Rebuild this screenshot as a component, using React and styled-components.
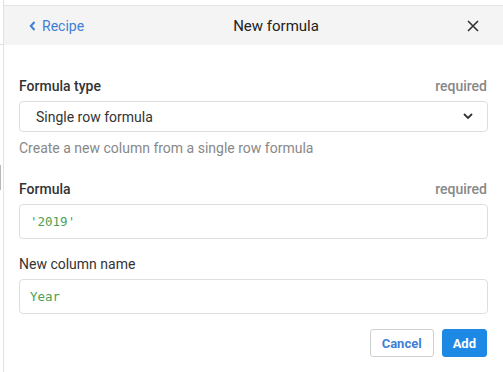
import styled, { createGlobalStyle } from "styled-components"

const GlobalStyle = createGlobalStyle`
  body {
    margin: 0;
    background: #fff;
    font-family: Roboto, "Liberation Sans", sans-serif;
    color: #333;
  }
`

function ChevronLeft() {
  return (
    <svg width="7" height="10" viewBox="0 0 7 10">
      <polyline points="5.5,1 1.8,5 5.5,9" fill="none" stroke="#3f7fd6" strokeWidth="2" />
    </svg>
  )
}

function ChevronDown() {
  return (
    <svg width="10" height="7" viewBox="0 0 10 7">
      <polyline points="1,1 5,5 9,1" fill="none" stroke="#333" strokeWidth="1.8" />
    </svg>
  )
}

function CloseIcon() {
  return (
    <svg width="12" height="12" viewBox="0 0 12 12">
      <path d="M1 1 L11 11 M11 1 L1 11" stroke="#333" strokeWidth="1.6" />
    </svg>
  )
}

export default function App() {
  return (
    <>
      <GlobalStyle />
      <Page>
        <Strip>
          <StripRule />
          <StripThumb />
        </Strip>
        <Panel>
          <Header>
            <BackLink>
              <ChevronLeft />
              <span>Recipe</span>
            </BackLink>
            <Title>New formula</Title>
            <CloseButton>
              <CloseIcon />
            </CloseButton>
          </Header>

          <Body>
            <Field>
              <LabelRow>
                <Label strong>Formula type</Label>
                <Required>required</Required>
              </LabelRow>
              <Select>
                <span>Single row formula</span>
                <ChevronDown />
              </Select>
              <Help>Create a new column from a single row formula</Help>
            </Field>

            <Field>
              <LabelRow>
                <Label strong>Formula</Label>
                <Required>required</Required>
              </LabelRow>
              <Input>'2019'</Input>
            </Field>

            <Field>
              <LabelRow>
                <Label>New column name</Label>
              </LabelRow>
              <Input>Year</Input>
            </Field>

            <Actions>
              <Button>Cancel</Button>
              <Button primary>Add</Button>
            </Actions>
          </Body>
        </Panel>
      </Page>
    </>
  )
}

const Page = styled.div`
  display: flex;
  height: 372px;
  overflow: hidden;
`
const Strip = styled.div`
  width: 3px;
  border-right: 1px solid #e2e2e2;
  display: flex;
  flex-direction: column;
`
const StripRule = styled.div`
  margin-top: 44px;
  height: 1px;
  background: #e0e0e0;
`
const StripThumb = styled.div`
  margin-top: 120px;
  width: 1px;
  height: 25px;
  background: #b8b8b8;
`
const Panel = styled.div`
  flex: 1;
  margin-top: 5px;
  border-top: 1px solid #e4e4e4;
  display: flex;
  flex-direction: column;
`
const Header = styled.header`
  height: 39px;
  background: #f4f4f4;
  display: flex;
  align-items: center;
  padding: 0 15px 0 22px;
`
const BackLink = styled.a`
  width: 68px;
  display: flex;
  align-items: center;
  gap: 6px;
  color: #3f7fd6;
  font-size: 14px;
  padding-left: 3px;
  box-sizing: border-box;
`
const Title = styled.h1`
  flex: 1;
  margin: 0;
  text-align: center;
  font-size: 15px;
  font-weight: 400;
  color: #222;
`
const CloseButton = styled.button`
  width: 30px;
  height: 30px;
  border: none;
  background: none;
  padding: 0;
  display: flex;
  align-items: center;
  justify-content: center;
`
const Body = styled.div`
  padding: 31px 15px 0 15px;
  display: flex;
  flex-direction: column;
`
const Field = styled.div`
  display: flex;
  flex-direction: column;
  margin-bottom: 15px;
`
const LabelRow = styled.div`
  display: flex;
  justify-content: space-between;
  align-items: center;
  height: 20px;
  margin-bottom: 5px;
`
const Label = styled.label`
  font-size: 14px;
  font-weight: ${(p) => (p.strong ? 500 : 400)};
  color: #333;
`
const Required = styled.span`
  font-size: 14px;
  font-weight: 500;
  color: #888;
  margin-right: 1px;
`
const Select = styled.div`
  height: 31px;
  box-sizing: border-box;
  border: 1px solid #dedede;
  border-radius: 4px;
  display: flex;
  align-items: center;
  justify-content: space-between;
  padding: 0 14px 0 16px;
  font-size: 14px;
  color: #333;
`
const Help = styled.p`
  margin: 7px 0 6px;
  font-size: 14px;
  line-height: 19px;
  color: #888;
`
const Input = styled.div`
  height: 35px;
  box-sizing: border-box;
  border: 1px solid #dedede;
  border-radius: 4px;
  display: flex;
  align-items: center;
  padding: 0 10px;
  font-family: "DejaVu Sans Mono", "Liberation Mono", monospace;
  font-size: 12.5px;
  color: #4d9f52;
`
const Actions = styled.div`
  display: flex;
  justify-content: flex-end;
  gap: 8px;
  padding-right: 1px;
`
const Button = styled.button`
  height: 28px;
  box-sizing: border-box;
  padding: 0 ${(p) => (p.primary ? "10px" : "11px")};
  border-radius: 3px;
  border: 1px solid ${(p) => (p.primary ? "#1e88e5" : "#cfcfcf")};
  background: ${(p) => (p.primary ? "#1e88e5" : "#fff")};
  color: ${(p) => (p.primary ? "#fff" : "#3f7fd6")};
  font-family: Roboto, "Liberation Sans", sans-serif;
  font-size: 13px;
  font-weight: 700;
`
